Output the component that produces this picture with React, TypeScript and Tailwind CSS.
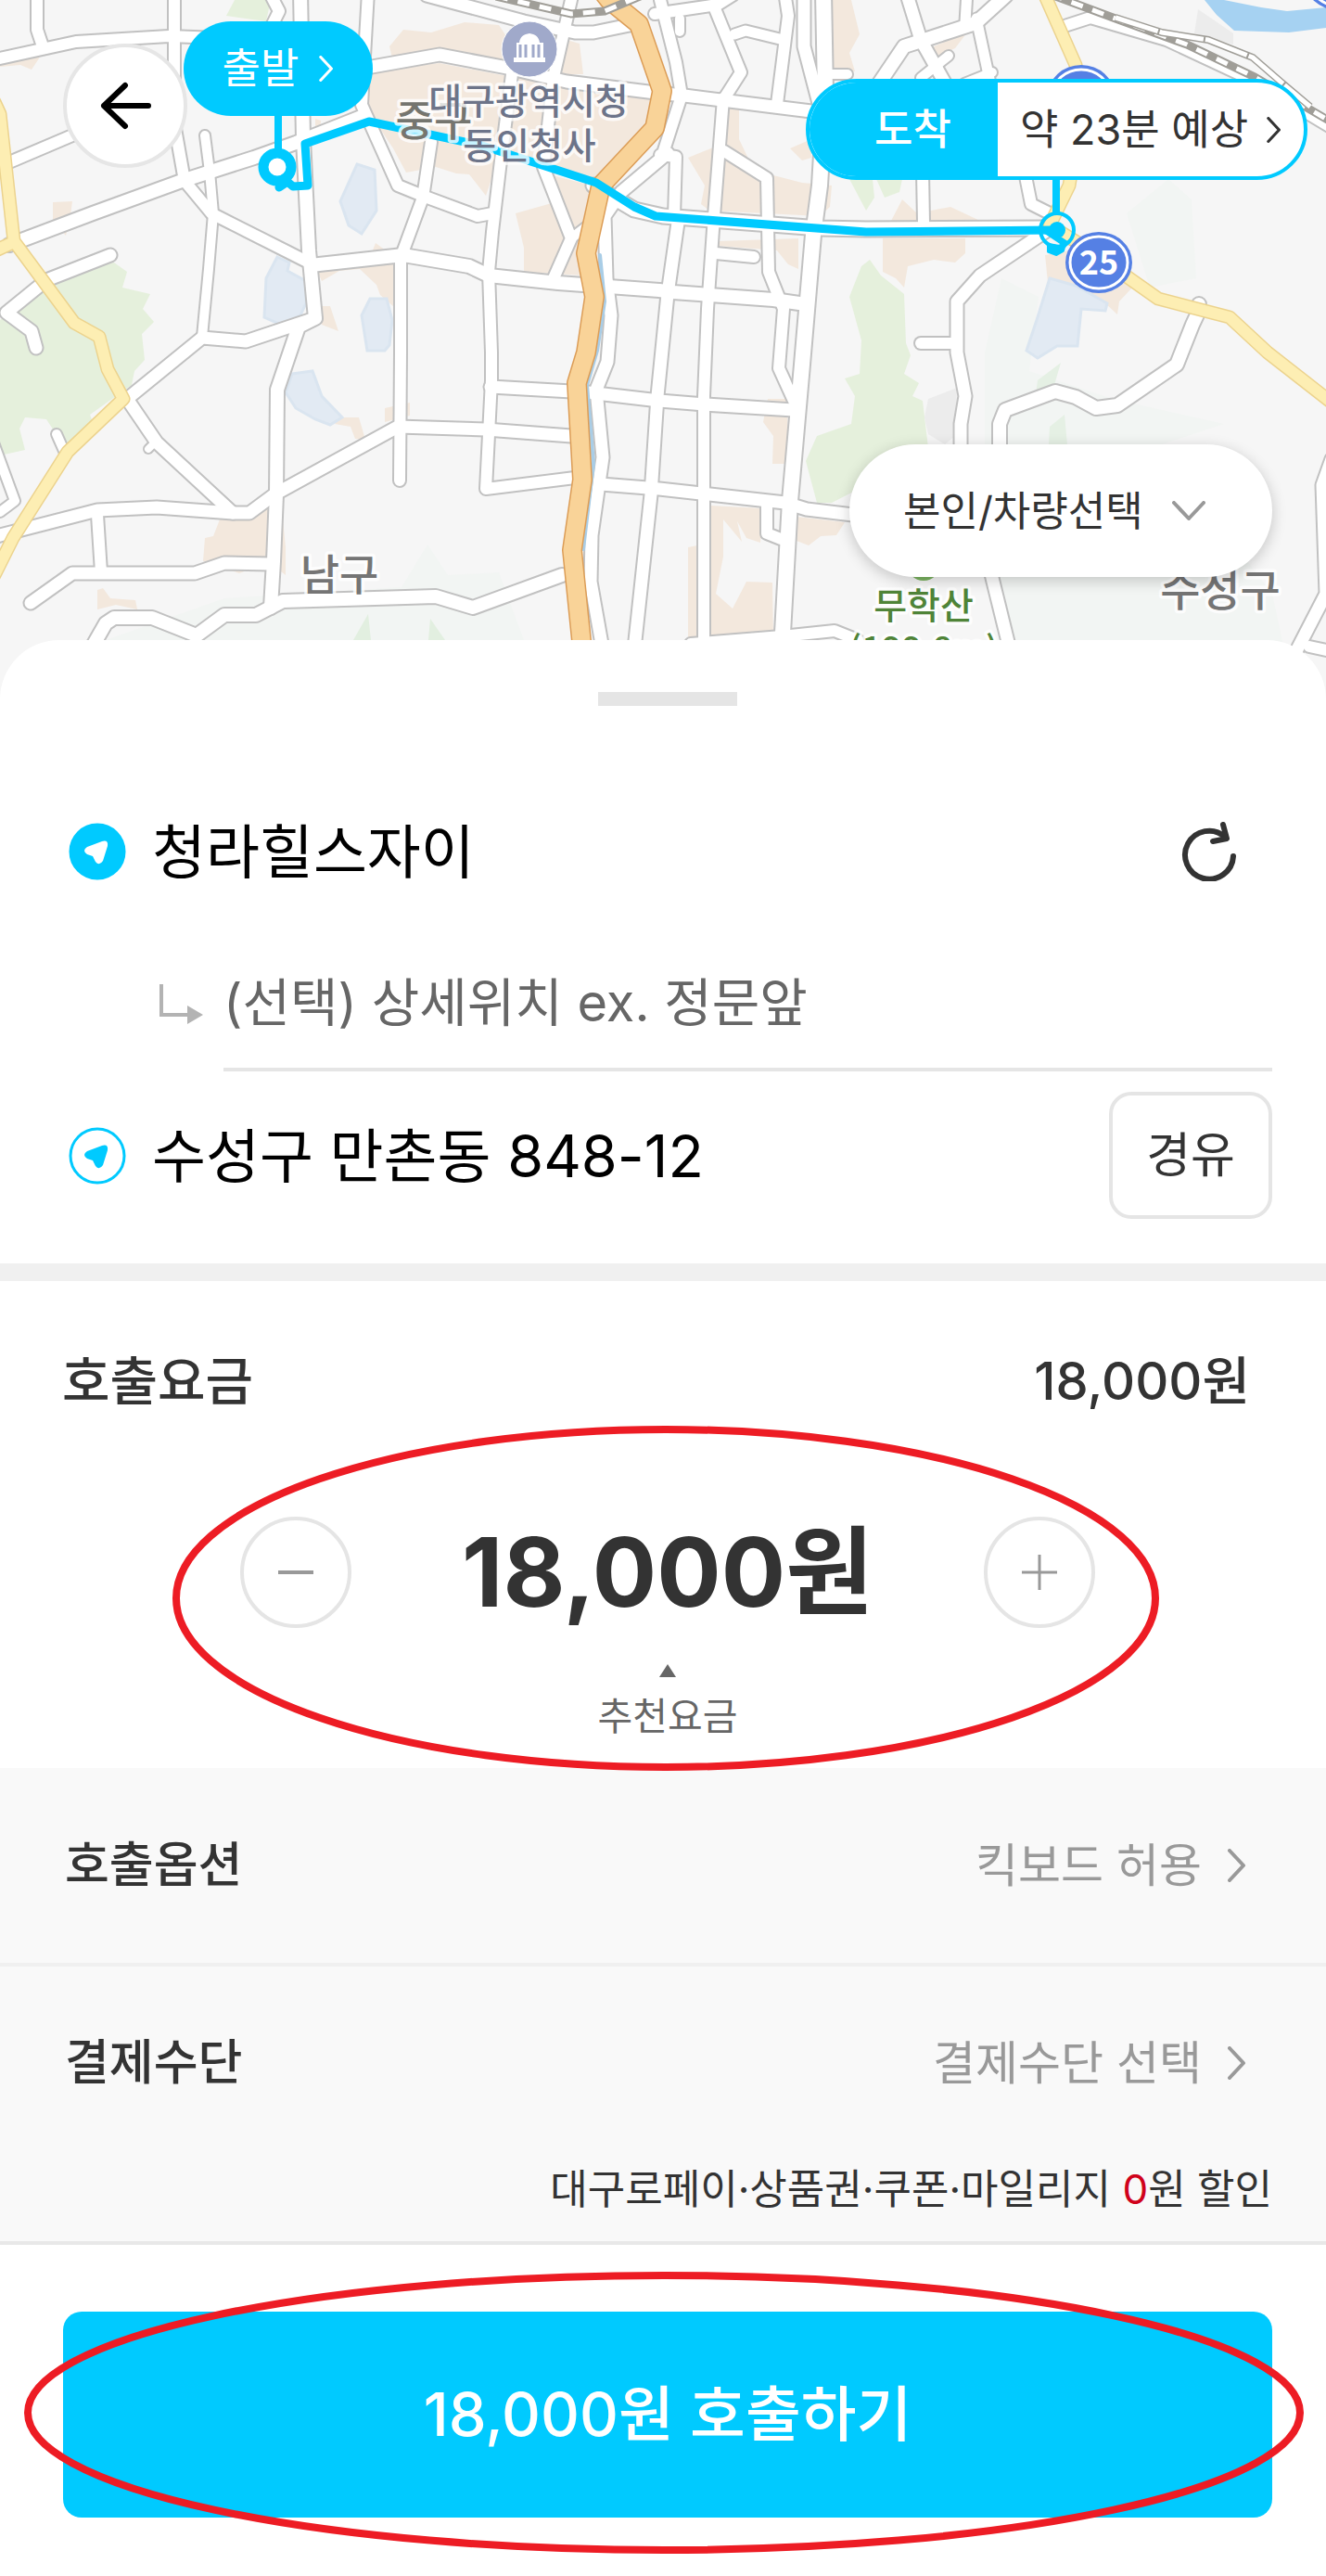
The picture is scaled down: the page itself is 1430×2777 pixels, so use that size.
import { useState } from "react";

const SANS = "font-['Inter','Noto_Sans_CJK_KR',sans-serif]";
const MAP_SANS = "font-['Noto_Sans_CJK_KR',sans-serif]";

const LAND = [
  { fill: "#f2f5f3", points: "114,690 242,645 433,633 461,587 483,620 538,617 565,690" },
  { fill: "#f2f5f3", points: "1062,380 1080,300 1120,320 1110,400 1200,430 1320,457 1250,480 1372,640 1398,760 1090,700 1062,600" },
  { fill: "#f2f5f3", points: "1215,230 1260,193 1285,215 1290,300 1240,310" },
  { fill: "#e5f0dc", points: "123,283 137,293 132,310 162,317 154,333 166,347 153,360 156,388 145,400 142,415 97,447 100,455 73,487 50,452 27,450 21,462 27,485 0,491 0,345 60,300" },
  { fill: "#e5f0dc", points: "253,0 244,17 287,23 292,0" },
  { fill: "#e5f0dc", points: "938,280 950,297 975,317 977,370 982,383 975,403 991,413 984,427 995,432 1001,483 960,520 922,500 928,480 938,455 957,452 950,475 940,520 897,542 881,542 869,497 881,470 918,457 922,427 911,408 927,403 929,367 916,320 929,287" },
  { fill: "#e5f0dc", points: "916,193 941,193 943,213 934,227" },
  { fill: "#e5f0dc", points: "945,193 973,193 970,207 954,213" },
  { fill: "#e2efe0", points: "381,690 397,662 400,690" },
  { fill: "#e2efe0", points: "462,690 464,667 480,690" },
  { fill: "#e5f0e4", points: "1117,425 1119,410 1144,391 1137,415" },
  { fill: "#e5f0e4", points: "1131,480 1132,460 1148,447 1151,480" },
  { fill: "#f3e8dd", points: "424,67 420,50 435,32 465,35 501,24 538,27 550,45 550,70 474,56" },
  { fill: "#f3e8dd", points: "394,77 474,68 547,82 702,103 707,117 704,133 648,197 556,173 535,178 524,211 506,188 492,187 470,180 438,186 424,160 394,115" },
  { fill: "#f3e8dd", points: "611,43 625,47 629,80 606,80" },
  { fill: "#f3e8dd", points: "602,217 556,230 565,267 565,293 629,297 638,200 588,187" },
  { fill: "#f3e8dd", points: "342,292 424,285 424,330 410,318 406,307 388,290 366,292 347,303" },
  { fill: "#f3e8dd", points: "400,275 405,262 416,270" },
  { fill: "#f3e8dd", points: "347,330 356,330 365,357 347,350" },
  { fill: "#f3e8dd", points: "57,218 78,217 76,232 71,254 57,238" },
  { fill: "#f3e8dd", points: "0,64 44,60 34,75 22,70 0,72" },
  { fill: "#f3e8dd", points: "340,128 346,130 345,142 340,142" },
  { fill: "#f3e8dd", points: "237,560 292,548 305,560 308,590 308,620 290,606 258,618 219,605 221,580 230,578" },
  { fill: "#f3e8dd", points: "105,657 105,636 111,634 119,645 146,647 148,657 125,652" },
  { fill: "#f3e8dd", points: "361,457 368,450 387,450 394,474 383,473 378,460" },
  { fill: "#f3e8dd", points: "415,440 442,434 442,448 415,455" },
  { fill: "#f3e8dd", points: "897,0 918,0 927,37 916,57 922,77 897,73" },
  { fill: "#f3e8dd", points: "786,117 797,117 797,150 808,173 824,187 838,190 865,197 897,200 895,223 884,233 765,227 756,220 760,200 742,170 774,157" },
  { fill: "#f3e8dd", points: "852,160 875,150 875,170 865,173" },
  { fill: "#f3e8dd", points: "774,260 861,257 861,290 850,285 838,270 774,265" },
  { fill: "#f3e8dd", points: "952,257 1041,257 1041,273 1030,283 1007,280 979,287 975,310 966,300 952,293" },
  { fill: "#f3e8dd", points: "961,238 973,215 989,230 1025,223 1057,238" },
  { fill: "#f3e8dd", points: "978,62 1043,35 1030,52 1008,62 995,55" },
  { fill: "#f3e8dd", points: "1127,275 1171,267 1221,310 1207,325 1205,339 1190,325 1160,310 1130,304" },
  { fill: "#f3e8dd", points: "766,545 822,548 820,585 805,580 795,562 800,584 780,560 780,600 772,640 790,656 805,627 833,628 834,688 742,688 742,590 766,585" },
  { fill: "#f3e8dd", points: "859,557 911,563 902,577 885,578 872,588 859,583" },
  { fill: "#f3e8dd", points: "828,430 850,430 848,500 833,500 834,470 823,455" },
  { fill: "#ececec", points: "1032,418 1001,430 997,450 1001,468 1019,479 1030,470" },
  { fill: "#ececec", points: "1292,10 1330,36 1330,48 1288,36" },
  { fill: "#a6d2f2", points: "1299,0 1312,16 1331,33 1390,35 1430,30 1430,0" },
  { fill: "#f6f6f6", points: "1320,0 1360,8 1388,12 1430,8 1430,0" },
];

const LAKES = [
  "385,177 404,183 406,227 390,252 376,243 367,217",
  "299,277 312,283 310,292 330,303 330,327 324,340 303,350 285,342 287,300",
  "399,322 417,322 423,345 420,372 415,378 396,378 390,340",
  "315,403 337,400 347,427 369,450 356,458 340,452 319,440 308,423",
  "1132,300 1160,308 1194,327 1192,335 1166,333 1162,373 1140,373 1119,386 1107,378 1118,345",
];

const ROADS: [number, string][] = [
  [12, "M0 63 82 45 182 39 260 42"],
  [12, "M40 -9V32L46 50"],
  [12, "M188 -9V133L199 195 228 230 335 284"],
  [10, "M221 146 226 185 230 230 225 290 218 363"],
  [14, "M324 -9 327 150 333 270 340 343 322 352 299 420 298 533 295 605 292 655"],
  [13, "M340 343 265 368 218 364 137 430 169 477 251 553"],
  [14, "M10 264 100 230 196 195 274 170 319 154 392 125"],
  [12, "M-9 183 78 146 110 130"],
  [12, "M397 -9 390 113 429 200 461 213 515 233 531 230"],
  [12, "M465 153 456 213 435 270 432 283V380L431 518"],
  [14, "M335 286 435 275 506 287 527 297 602 305 711 313 726 315 834 323 862 327"],
  [13, "M401 72 474 59 547 73 611 88 707 100 738 103 875 120"],
  [12, "M552 80 540 173 531 250 527 293 530 380V410L524 527 620 515"],
  [12, "M618 -9 597 83 586 180 616 257 597 300"],
  [10, "M634 243 616 257"],
  [13, "M460 -5 565 23 620 35 640 35 679 27"],
  [12, "M290 -9 301 12 294 26"],
  [13, "M119 275 50 302 7 337 34 357 39 375"],
  [13, "M-9 580 0 577 105 550 169 547 251 553H269L296 533 429 460 524 463 616 470"],
  [12, "M105 555 109 617"],
  [13, "M33 650 78 618H210L242 607 292 608"],
  [14, "M98 700 114 672 123 666H164L212 685 242 663H276L305 648 470 643 510 655 606 620"],
  [13, "M529 417 634 423 711 432 760 436 856 442"],
  [13, "M720 165 670 207 652 233 654 300 659 340 655 390 643 420 650 493 638 577 637 627 650 700"],
  [13, "M648 522 711 527 847 542 870 549 920 555"],
  [13, "M731 240 720 317 709 427 702 533 684 700"],
  [8, "M160 484 166 478"],
  [10, "M61 468 69 486"],
  [10, "M-6 480 16 540 0 552"],
  [12, "M706 15 774 5 790 -5"],
  [10, "M733 20V34"],
  [12, "M770 7 799 78 783 103"],
  [12, "M846 -9 850 17 838 112"],
  [11, "M792 37 804 33 845 43"],
  [13, "M867 -9V50L884 115"],
  [16, "M888 -9 890 100 884 200 877 253 865 393 852 540 843 700"],
  [10, "M892 80H914"],
  [12, "M712 0 729 67 735 103 716 162"],
  [12, "M712 167 729 169 727 233"],
  [12, "M780 106 770 233 763 333 759 427V700"],
  [12, "M781 163 827 192 829 293 845 333 840 397 856 432"],
  [12, "M772 273 813 277"],
  [12, "M827 545V575L842 581"],
  [13, "M977 -9 993 43 1025 100"],
  [14, "M948 90 975 50 1052 25 1085 -5"],
  [11, "M1043 -9 1041 24"],
  [11, "M1053 20 1068 90"],
  [10, "M1023 60 993 84"],
  [10, "M1040 90 1070 78"],
  [15, "M640 200 684 226 715 233 884 246 934 247 1132 246"],
  [12, "M995 185 996 240"],
  [12, "M1105 185 1112 220 1136 232"],
  [13, "M1127 250 1057 297 1032 325V380L1041 427 1036 457V480L1071 627 1089 700"],
  [12, "M993 370H1032"],
  [14, "M1078 490V457L1084 442 1138 422 1160 428 1182 440 1205 437 1269 393 1286 350 1293 335 1293 328"],
  [13, "M1436 495 1426 523 1430 640 1399 700"],
  [12, "M1412 697 1440 703"],
  [12, "M745 694 843 686 900 680 925 690"],
  [12, "M1145 29 1176 19 1258 43 1350 86 1440 140"],
];

const HIGHWAYS: [number, string][] = [
  [12, "M-6 110 0 123 15 260 80 348 107 363 116 398 133 430 73 487 14 580 -6 620"],
  [12, "M-9 272 15 261"],
  [12, "M1125 -9 1160 70 1168 110 1153 200 1132 243 1171 267 1249 322 1326 342 1367 380 1440 437"],
];

const TRUNK = "M650 -9 657 0 689 26 714 98 706 138 648 200 632 273 641 320 632 380 622 413 628 517 617 593 629 710";

const RAILS = [
  "M535 -4 616 15 652 12 695 -6",
  "M1133 -6 1203 20 1280 48 1353 83 1440 134",
];

const MAP_LABELS = [
  { x: 468, y: 147, size: 45, fill: "#75756f", text: "중구" },
  { x: 570, y: 123, size: 39, fill: "#6d7489", text: "대구광역시청" },
  { x: 571, y: 171, size: 39, fill: "#6d7489", text: "동인청사" },
  { x: 366, y: 636, size: 46, fill: "#757575", text: "남구" },
  { x: 1316, y: 653, size: 47, fill: "#757575", text: "수성구" },
  { x: 996, y: 667, size: 39, fill: "#4f8438", text: "무학산" },
  { x: 996, y: 713, size: 38, fill: "#4f8438", text: "(199.8m)" },
];

function RouteBadge({ cx, cy }: { cx: number; cy: number }) {
  return (
    <>
      <ellipse cx={cx} cy={cy} rx="36" ry="33" fill="#5580e4" />
      <ellipse cx={cx} cy={cy} rx="31" ry="28" fill="none" stroke="#fff" strokeWidth="3" />
    </>
  );
}

function MapView() {
  return (
    <svg
      className={`absolute inset-0 h-full w-full ${MAP_SANS}`}
      viewBox="0 0 1430 754"
      preserveAspectRatio="xMidYMid slice"
      aria-label="지도"
    >
      <rect width="1430" height="754" fill="#f6f6f6" />
      {LAND.map((area) => (
        <polygon key={area.points} points={area.points} fill={area.fill} />
      ))}
      {LAKES.map((points) => (
        <polygon key={points} points={points} fill="#e2eaf3" stroke="#dae5f0" strokeWidth="3" />
      ))}
      <g fill="none" strokeLinecap="round" strokeLinejoin="round">
        {ROADS.map(([width, d]) => (
          <path key={d} d={d} stroke="#c1c1c1" strokeWidth={width + 4} />
        ))}
        {ROADS.map(([width, d]) => (
          <path key={d} d={d} stroke="#fff" strokeWidth={width} />
        ))}
        <path d="M647 275 652 325 644 378 633 415 640 500 629 592" stroke="#a9cde6" strokeWidth="4" />
        {HIGHWAYS.map(([width, d]) => (
          <path key={d} d={d} stroke="#ecd38e" strokeWidth={width + 3} />
        ))}
        {HIGHWAYS.map(([width, d]) => (
          <path key={d} d={d} stroke="#fdeeb3" strokeWidth={width} />
        ))}
        <path d={TRUNK} stroke="#dc9d57" strokeWidth="22" />
        <path d={TRUNK} stroke="#f9d398" strokeWidth="19" />
      </g>
      <g fill="none">
        {RAILS.map((d) => (
          <path key={d} d={d} stroke="#a09e98" strokeWidth="9" />
        ))}
        {RAILS.map((d) => (
          <path key={d} d={d} stroke="#fff" strokeWidth="5" strokeDasharray="13 11" />
        ))}
        <path d="M1203 19 1253 35 1303 43 1351 62 1381 88 1413 115" stroke="#a09e98" strokeWidth="8" />
        <path d="M1203 19 1253 35 1303 43 1351 62 1381 88 1413 115" stroke="#fff" strokeWidth="5" strokeDasharray="48 2" />
      </g>

      {/* route */}
      <path
        d="M301 202 310 196 316 201 332 200 329 155 398 131 520 157 643 197 684 223 707 233 934 250 1136 248"
        fill="none"
        stroke="#00caff"
        strokeWidth="9"
        strokeLinejoin="round"
        strokeLinecap="round"
      />
      <path d="M300 110V166" stroke="#00caff" strokeWidth="8" />
      <circle cx="299" cy="180" r="15" fill="#fff" stroke="#00caff" strokeWidth="11" />

      <path d="M1139 185V230" stroke="#00caff" strokeWidth="8" />
      <circle cx="1140" cy="248" r="18" fill="none" stroke="#00caff" strokeWidth="4" />
      <circle cx="1140" cy="248" r="9" fill="#00caff" />
      <path d="M1127 248 1151 264" stroke="#00caff" strokeWidth="7" />
      <path
        d="M1131 264 1142 266 1148 263 1146 270 1139 274 1131 271Z"
        fill="#00caff"
        stroke="#00caff"
        strokeWidth="4"
        strokeLinejoin="round"
      />

      <circle cx="571" cy="53" r="30" fill="#a0a9ca" stroke="#fff" strokeWidth="1" />
      <path
        d="M557 62V46H560C561 39 565 37 571 36 577 37 581 39 582 46H586V62H588V67H554V62Z"
        fill="#fff"
      />
      <path d="M561 48V62M567 48V62M575 48V62M581 48V62" stroke="#a0a9ca" strokeWidth="3" />

      <RouteBadge cx={1166} cy={103} />
      <RouteBadge cx={1443} cy={-22} />
      <RouteBadge cx={1185} cy={283} />
      <text x="1185" y="296" textAnchor="middle" fontSize="36" fontWeight="700" fill="#fff">
        25
      </text>
      <circle cx="996" cy="608" r="18" fill="#7cb461" />

      {MAP_LABELS.map((label) => (
        <text
          key={label.text}
          x={label.x}
          y={label.y}
          textAnchor="middle"
          fontSize={label.size}
          fontWeight="500"
          fill={label.fill}
          stroke="#fff"
          strokeOpacity="0.8"
          strokeWidth="7"
          strokeLinejoin="round"
          paintOrder="stroke"
        >
          {label.text}
        </text>
      ))}
    </svg>
  );
}

function Chevron({ className }: { className: string }) {
  return (
    <svg className={className} viewBox="0 0 20 36" fill="none" stroke="currentColor" strokeWidth="4" aria-hidden="true">
      <path d="M2 2 17 18 2 34" strokeLinecap="round" strokeLinejoin="round" />
    </svg>
  );
}

function PlaceIcon({ filled }: { filled?: boolean }) {
  return (
    <svg className="size-[62px] shrink-0" viewBox="0 0 62 62" aria-hidden="true">
      <circle cx="31" cy="31" r="29" fill={filled ? "#00caff" : "#fff"} stroke="#00caff" strokeWidth="3" />
      <path
        d="M20 26 36 20Q43 18 42 25L37 41Q33 47 29 42L26 36 20 34Q14 30 20 26Z"
        fill={filled ? "#fff" : "#00caff"}
      />
    </svg>
  );
}

interface OptionRowProps {
  label: string;
  value: string;
}

function OptionRow({ label, value }: OptionRowProps) {
  return (
    <button className="flex w-full items-center justify-between pr-[86px] pl-[70px] text-left">
      <span className="text-[52px] leading-[60px] font-medium text-[#333]">{label}</span>
      <span className="flex items-center gap-[28px] text-[50px] leading-[60px] text-[#999]">
        {value}
        <Chevron className="h-[36px] w-[20px]" />
      </span>
    </button>
  );
}

export default function App() {
  const [fare, setFare] = useState<number>(18000);
  const price = `${fare.toLocaleString("en-US")}원`;

  return (
    <main className={`w-full bg-white text-[#333] ${SANS}`}>
      <section className="relative h-[754px] overflow-hidden">
        <MapView />
        <button
          aria-label="뒤로"
          className="absolute top-[47px] left-[68px] flex size-[134px] items-center justify-center rounded-full border-4 border-[#e6e6e6] bg-white"
        >
          <svg className="h-[52px] w-[56px]" viewBox="0 0 56 52" fill="none" stroke="#000" strokeWidth="6">
            <path d="M28 4 5 26 28 48M5 26H53" strokeLinecap="round" strokeLinejoin="round" />
          </svg>
        </button>
        <button className="absolute top-[23px] left-[198px] flex h-[102px] w-[204px] items-center justify-center gap-[22px] rounded-full bg-[#00caff] text-[45px] text-white">
          출발
          <Chevron className="h-[28px] w-[16px]" />
        </button>
        <button className="absolute top-[85px] right-[20px] flex h-[109px] w-[541px] overflow-hidden rounded-full border-4 border-[#00caff] bg-white text-[45px]">
          <span className="flex h-full w-[203px] items-center justify-center bg-[#00caff] pl-[20px] font-medium text-white">
            도착
          </span>
          <span className="flex h-full grow items-center justify-center gap-[20px]">
            약 23분 예상
            <Chevron className="h-[28px] w-[16px]" />
          </span>
        </button>
        <label className="absolute top-[479px] right-[58px] flex h-[143px] w-[456px] items-center rounded-full bg-white shadow-[0_4px_16px_rgba(0,0,0,0.2)]">
          <select
            aria-label="본인/차량선택"
            className="h-full w-full appearance-none rounded-full bg-transparent pl-[58px] text-[44px] text-[#333]"
          >
            <option>본인/차량선택</option>
          </select>
          <svg
            className="pointer-events-none absolute right-[72px] h-[22px] w-[36px]"
            viewBox="0 0 36 22"
            fill="none"
            stroke="#999"
            strokeWidth="4"
          >
            <path d="M2 2 18 19 34 2" strokeLinecap="round" strokeLinejoin="round" />
          </svg>
        </label>
      </section>

      <section className="relative -mt-16 rounded-t-[64px] bg-white pt-[56px]">
        <div className="flex justify-center pl-[10px]">
          <div className="h-[15px] w-[150px] bg-[#e5e5e5]" />
        </div>
        <div className="mt-[112px] flex h-[90px] items-center gap-[28px] pr-[96px] pl-[74px]">
          <PlaceIcon filled />
          <span className="grow text-[63px] leading-[90px] text-black">청라힐스자이</span>
          <button aria-label="새로고침">
            <svg className="h-[64px] w-[60px]" viewBox="0 0 60 64" fill="none" stroke="#333" strokeWidth="6">
              <path d="M56 37A26 26 0 1 1 47 16" strokeLinecap="round" />
              <path d="M45 3 49 18 34 21" strokeLinecap="round" strokeLinejoin="round" />
            </svg>
          </button>
        </div>
        <div className="mt-[48px] mr-[58px] ml-[172px] flex h-[144px] items-center">
          <svg className="h-[44px] w-[69px] shrink-0" viewBox="0 0 69 44" fill="none" aria-hidden="true">
            <path d="M2 0V33H30" stroke="#b3b3b3" strokeWidth="4" />
            <path d="M30 23 47 33 30 43Z" fill="#b3b3b3" />
          </svg>
          <input
            aria-label="상세위치"
            placeholder="(선택) 상세위치 ex. 정문앞"
            className="h-full w-full min-w-0 border-b-4 border-[#e5e5e5] bg-transparent text-[56px] placeholder:text-[#666]"
          />
        </div>
        <div className="mt-[22px] flex h-[137px] items-center gap-[28px] pr-[58px] pl-[74px]">
          <PlaceIcon />
          <span className="grow text-[63px] leading-[90px] text-black">수성구 만촌동 848-12</span>
          <button className="h-full w-[176px] rounded-[24px] border-4 border-[#e5e5e5] text-[52px]">경유</button>
        </div>
        <div className="mt-[48px] h-[19px] bg-[#f0f0f0]" />
      </section>

      <section className="relative h-[525px] pt-[68px]">
        <div className="flex h-[80px] items-center justify-between pr-[82px] pl-[67px] text-[56px] font-medium">
          <h2>호출요금</h2>
          <span>{price}</span>
        </div>
        <div className="mt-[106px] ml-[10px] flex h-[120px] items-center justify-center gap-[114px]">
          <button
            aria-label="요금 내리기"
            onClick={() => setFare((prev) => Math.max(prev - 1000, 0))}
            className="flex size-[120px] items-center justify-center rounded-full border-4 border-[#e5e5e5]"
          >
            <svg className="size-[38px]" viewBox="0 0 38 38" stroke="#999" strokeWidth="4">
              <path d="M0 19H38" />
            </svg>
          </button>
          <strong className="w-[454px] text-center text-[103px] leading-[120px] font-bold">{price}</strong>
          <button
            aria-label="요금 올리기"
            onClick={() => setFare((prev) => prev + 1000)}
            className="flex size-[120px] items-center justify-center rounded-full border-4 border-[#e5e5e5]"
          >
            <svg className="size-[38px]" viewBox="0 0 38 38" stroke="#999" strokeWidth="3">
              <path d="M0 19H38M19 0V38" />
            </svg>
          </button>
        </div>
        <div className="mt-[39px] ml-[10px] flex flex-col items-center gap-[12px] text-[41px] leading-[60px] text-[#666]">
          <svg className="h-[14px] w-[18px]" viewBox="0 0 18 14" fill="#666" aria-hidden="true">
            <path d="M9 0 18 14H0Z" />
          </svg>
          추천요금
        </div>
      </section>

      <section className="border-b-4 border-[#e8e8e8] bg-[#f9f9f9]">
        <div className="flex h-[214px] items-center border-b-4 border-[#f0f0f0]">
          <OptionRow label="호출옵션" value="킥보드 허용" />
        </div>
        <div className="flex h-[208px] items-center">
          <OptionRow label="결제수단" value="결제수단 선택" />
        </div>
        <p className="pr-[58px] pb-[24px] text-right text-[44px] leading-[64px]">
          대구로페이·상품권·쿠폰·마일리지 <span className="text-[#d0021b]">0</span>원 할인
        </p>
      </section>

      <section className="relative pt-[72px] pr-[58px] pb-[63px] pl-[68px]">
        <button className="h-[222px] w-full rounded-[20px] bg-[#00caff] text-[65px] font-medium text-white">
          {price} 호출하기
        </button>
        <svg
          className="pointer-events-none absolute top-[29px] left-[26px] h-[304px] w-[1380px]"
          viewBox="0 0 1380 304"
          fill="none"
        >
          <ellipse cx="690" cy="152" rx="686" ry="148" stroke="#ed1c24" strokeWidth="8" />
        </svg>
        <svg
          className="pointer-events-none absolute top-[-883px] left-[186px] h-[372px] w-[1064px]"
          viewBox="0 0 1064 372"
          fill="none"
        >
          <ellipse cx="532" cy="186" rx="528" ry="182" stroke="#ed1c24" strokeWidth="8" />
        </svg>
      </section>
    </main>
  );
}
